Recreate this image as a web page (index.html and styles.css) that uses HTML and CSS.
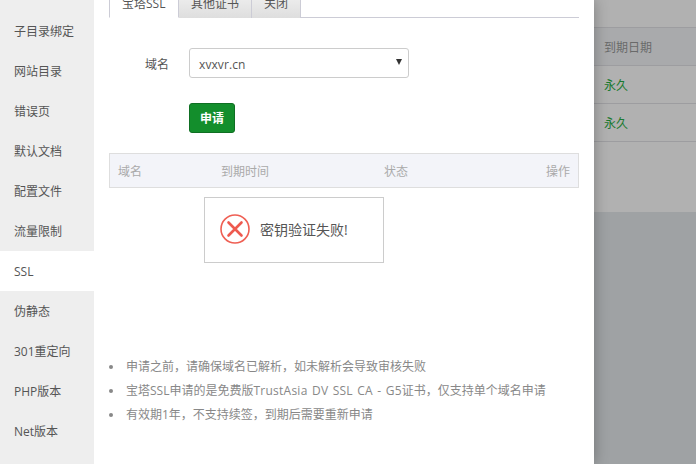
FILE: index.html
```html
<!DOCTYPE html>
<html lang="zh">
<head>
<meta charset="utf-8">
<title>SSL</title>
<link rel="stylesheet" href="styles.css">
</head>
<body>
<div class="screen">
  <div class="layer">
    <nav class="side">
      <div class="side-item">子目录绑定</div>
      <div class="side-item">网站目录</div>
      <div class="side-item">错误页</div>
      <div class="side-item">默认文档</div>
      <div class="side-item">配置文件</div>
      <div class="side-item">流量限制</div>
      <div class="side-item active">SSL</div>
      <div class="side-item">伪静态</div>
      <div class="side-item">301重定向</div>
      <div class="side-item">PHP版本</div>
      <div class="side-item">Net版本</div>
    </nav>
    <main class="main">
      <div class="tabs">
        <div class="tab on">宝塔SSL</div>
        <div class="tab">其他证书</div>
        <div class="tab">关闭</div>
      </div>
      <div class="form-row">
        <label class="label">域名</label>
        <div class="select"><span class="select-text">xvxvr.cn</span><i class="caret"></i></div>
      </div>
      <button class="apply">申请</button>
      <div class="thead">
        <span>域名</span><span>到期时间</span><span>状态</span><span>操作</span>
      </div>
      <ul class="notes">
        <li><span>申请之前，请确保域名已解析，如未解析会导致审核失败</span></li>
        <li><span>宝塔SSL申请的是免费版<span class="latin">TrustAsia DV SSL CA - G5</span>证书，仅支持单个域名申请</span></li>
        <li><span>有效期1年，不支持续签，到期后需要重新申请</span></li>
      </ul>
      <div class="toast">
        <svg class="toast-icon" viewBox="0 0 30 30" width="30" height="30">
          <circle cx="15" cy="15" r="14" fill="none" stroke="#ef5f53" stroke-width="1.6"/>
          <path d="M8.5 8.5 L21.5 21.5 M21.5 8.5 L8.5 21.5" fill="none" stroke="#ee5a4f" stroke-width="2.6" stroke-linecap="round"/>
        </svg>
        <span>密钥验证失败!</span>
      </div>
    </main>
  </div>
  <aside class="back">
    <div class="back-top">
      <div class="back-gap"></div>
      <div class="back-head">到期日期</div>
      <div class="back-row">永久</div>
      <div class="back-row">永久</div>
    </div>
  </aside>
</div>
</body>
</html>
```

FILE: styles.css
```css
* { box-sizing: border-box; }
html, body { margin: 0; height: 100%; overflow: hidden; }
body {
  font-family: "Open Sans", "Noto Sans CJK SC", sans-serif;
  font-size: 12px;
  color: #555;
}
.screen { display: flex; height: 464px; width: 696px; overflow: hidden; }
.layer {
  width: 594px;
  display: flex;
  background: #fff;
  position: relative;
  z-index: 1;
  box-shadow: 0 0 14px rgba(0, 0, 0, .3);
}
.side { width: 94px; background: #eee; padding-top: 11px; flex: none; }
.side-item { height: 40px; line-height: 42px; padding-left: 14px; color: #555; }
.side-item.active { background: #fff; }
.main { flex: 1; position: relative; padding: 0 15px; margin-top: -9px; }
.tabs { display: flex; height: 27px; border-bottom: 1px solid #ccccd6; }
.tab {
  height: 27px;
  line-height: 26px;
  padding: 0 12px;
  border-right: 1px solid #ccccd6;
  background: linear-gradient(#f2f2f2, #dedede);
  color: #555;
}
.tab.on { background: #fff; border-left: 1px solid #ccccd6; width: 70px; border-bottom: 1px solid #fff; border-right: 1px solid #ccccd6; }
.form-row { display: flex; align-items: center; margin-top: 30px; height: 30px; }
.label { width: 60px; text-align: right; margin-right: 20px; padding-top: 2px; }
.select {
  width: 220px;
  height: 30px;
  border: 1px solid #ccc;
  border-radius: 3px;
  padding: 0 6px 0 9px;
  display: flex;
  align-items: center;
  justify-content: space-between;
  color: #555;
}
.select-text { padding-top: 2px; letter-spacing: .1px; }
.caret {
  width: 0;
  height: 0;
  border-left: 3px solid transparent;
  border-right: 3px solid transparent;
  border-top: 6px solid #333;
  margin-top: -2px;
}
.apply {
  display: block;
  margin: 25px 0 0 80px;
  width: 46px;
  height: 30px;
  padding: 0;
  background: #138e2c;
  border: 1px solid #0f6f23;
  border-radius: 3px;
  color: #fff;
  font: bold 12px "Open Sans", "Noto Sans CJK SC", sans-serif;
}
.thead {
  margin-top: 20px;
  height: 35px;
  border: 1px solid #dedede;
  background: #f3f4f9;
  padding: 0 8px;
  display: grid;
  grid-template-columns: 103px 163px 1fr auto;
  align-items: center;
  color: #aaa;
}
.notes { list-style: none; margin: 167px 0 0; padding: 0; color: #888; }
.notes li { height: 24px; line-height: 24px; display: flex; align-items: center; gap: 13px; }
.notes li::before { content: ""; width: 4px; height: 4px; border-radius: 50%; background: #888; flex: none; }
.latin { letter-spacing: .25px; word-spacing: 1px; }
.toast {
  position: absolute;
  left: 110px;
  top: 206px;
  width: 180px;
  height: 66px;
  background: #fff;
  border: 1px solid #ccc;
  display: flex;
  align-items: center;
  gap: 10px;
  padding: 0 0 2px 15px;
  font-size: 14px;
  color: #555;
}
.toast-icon { flex: none; }
.back { flex: 1; background: #9fa2a4; }
.back-top { height: 212px; background: #b1b1b1; }
.back-gap { height: 28px; border-bottom: 1px solid #9d9da0; }
.back-head {
  height: 38px;
  line-height: 39px;
  padding-left: 10px;
  background: #a9aaac;
  border-bottom: 1px solid #9d9da0;
  color: #6a6a6a;
}
.back-row {
  height: 38px;
  line-height: 39px;
  padding-left: 10px;
  border-bottom: 1px solid #9d9da0;
  color: #1a7a30;
}
```
